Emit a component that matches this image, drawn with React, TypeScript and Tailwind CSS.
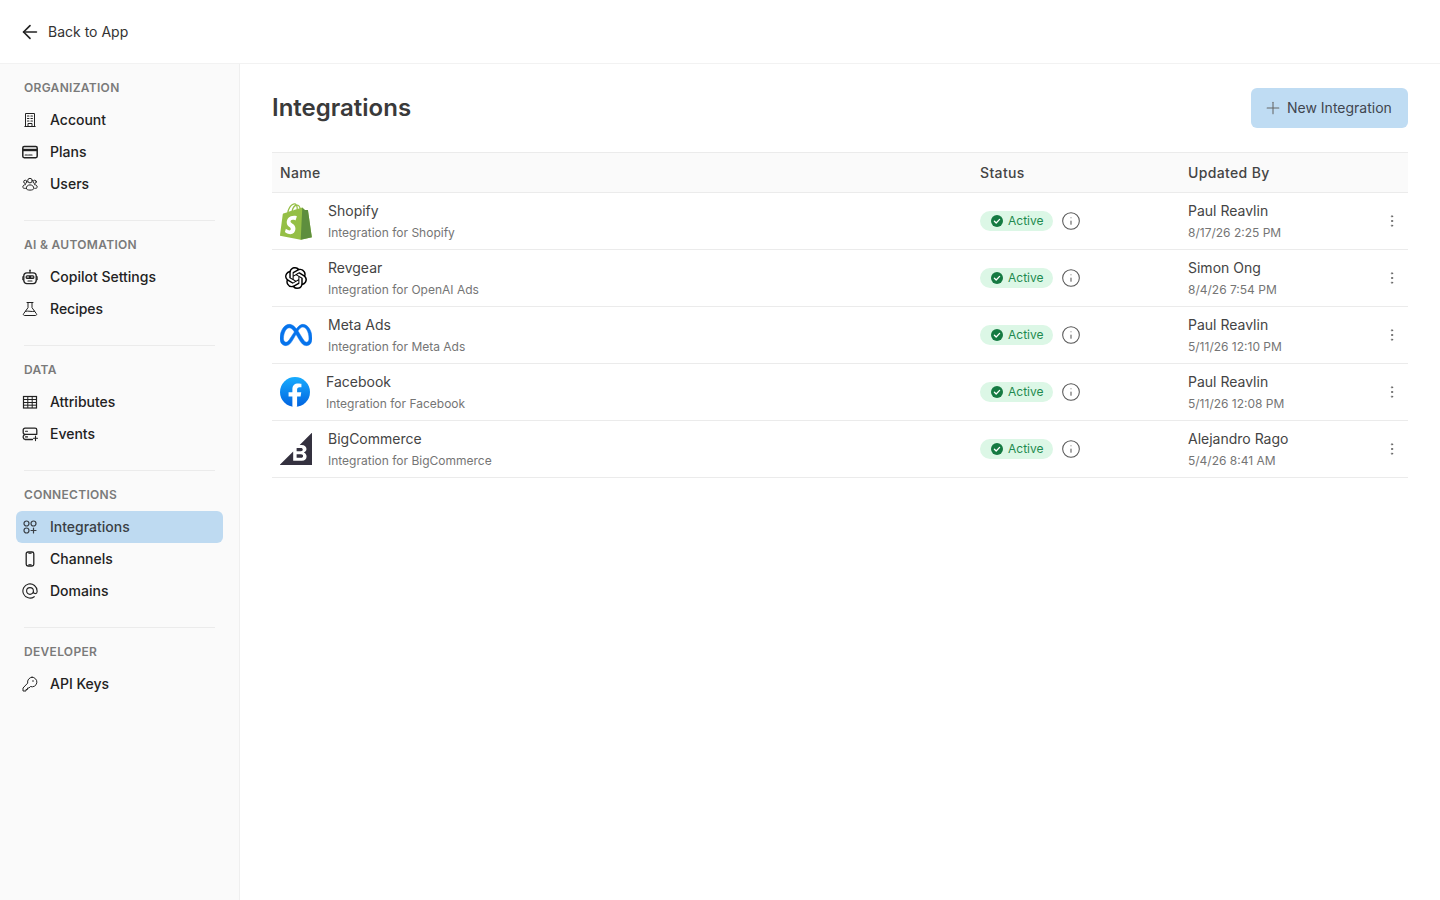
import { ArrowLeft, Plus, Info, EllipsisVertical } from 'lucide-react'
import { SiOpenai, SiMeta, SiBigcommerce } from 'react-icons/si'
import type { ReactNode } from 'react'

const Ico = ({ children }: { children: ReactNode }) => (
    <svg width="16" height="16" viewBox="0 0 16 16" fill="none" stroke="currentColor" strokeWidth="1" strokeLinecap="round" strokeLinejoin="round">
        {children}
    </svg>
)

const BuildingIcon = () => (
    <Ico>
        <path d="M3.500 14.500v-13h9v13M2.800 14.500h10.400" />
        <path d="M5.500 4h1.400M9 4h1.400M5.500 6.500h1.400M9 6.500h1.400M5.500 9h1.400M9 9h1.400" strokeWidth="1.200" />
        <path d="M6 14.500v-3h4v3" />
    </Ico>
)
const CardIcon = () => (
    <Ico>
        <rect x="0.800" y="2.500" width="14.400" height="11.200" rx="1.400" strokeWidth="1.500" />
        <path d="M1 6h14" strokeWidth="2.400" strokeLinecap="butt" />
        <path d="M3.200 11h2.200M6.600 11h3.400" strokeWidth="1.200" />
    </Ico>
)
const UsersIcon = () => (
    <Ico>
        <circle cx="8" cy="4.600" r="2.300" />
        <circle cx="3.300" cy="5.800" r="1.600" />
        <circle cx="12.700" cy="5.800" r="1.600" />
        <path d="M4.200 12.400c0-2.200 1.700-3.500 3.800-3.500s3.800 1.300 3.800 3.500c0 1.100-1.700 1.700-3.800 1.700s-3.800-.6-3.800-1.700z" />
        <path d="M3.500 8.600C2 8.600.8 9.600.8 11.100c0 .8.800 1.300 2.300 1.300M12.500 8.600c1.500 0 2.700 1 2.700 2.500 0 .8-.8 1.300-2.300 1.300" />
    </Ico>
)
const RobotIcon = () => (
    <Ico>
        <path d="M8 1.800v2" strokeWidth="1.200" />
        <circle cx="8" cy="1.400" r="0.800" fill="currentColor" stroke="none" />
        <rect x="1.800" y="3.800" width="12.400" height="10.800" rx="3" strokeWidth="1.300" />
        <path d="M1.500 7.500H.8v3.500h.7M14.500 7.500h.7v3.500h-.7" />
        <rect x="3.600" y="6.200" width="8.800" height="3.800" rx="1.500" fill="currentColor" stroke="none" />
        <path d="M5.200 8h1.400M9.400 8h1.400" stroke="#fafafa" strokeWidth="0.900" />
        <path d="M6 12h4" strokeWidth="1.100" />
    </Ico>
)
const FlaskIcon = () => (
    <Ico>
        <path d="M5 1.500h6M6 1.500v5.200L1.700 12.600a1.100 1.100 0 0 0 .9 1.900h10.800a1.100 1.100 0 0 0 .9-1.900L10 6.700V1.500" />
        <path d="M3.400 10.300c2.800-.9 6.400.9 9.200 0" />
    </Ico>
)
const TableIcon = () => (
    <Ico>
        <rect x="1.500" y="2.500" width="13" height="11.500" strokeWidth="1.200" strokeLinejoin="miter" />
        <path d="M1.500 5.500h13M1.500 8.500h13M1.500 11.200h13M5.800 2.500v11.500M10.200 2.500v11.500" strokeLinecap="butt" />
    </Ico>
)
const ServerIcon = () => (
    <Ico>
        <path d="M4 8.300H3a1.800 1.800 0 0 1-1.800-1.800V4A1.800 1.800 0 0 1 3 2.200h10A1.800 1.800 0 0 1 14.800 4v4.300H4a2.600 2.600 0 0 0-2.800 2.500v.6A2.600 2.600 0 0 0 3 13.500h7.500" strokeWidth="1.300" />
        <path d="M3.500 5.300h2M3.500 10.900h2" strokeWidth="1.100" />
        <path d="M13.500 10v4.600M11.500 12.300h4" strokeWidth="1.100" />
    </Ico>
)
const ShapesIcon = () => (
    <Ico>
        <circle cx="4.500" cy="4.500" r="2.500" strokeWidth="1.200" />
        <circle cx="11.500" cy="4.500" r="2.500" strokeWidth="1.200" />
        <circle cx="4.500" cy="11.500" r="2.500" strokeWidth="1.200" />
        <path d="M11.500 9v5M9 11.500h5" strokeWidth="1.200" />
    </Ico>
)
const PhoneIcon = () => (
    <Ico>
        <rect x="4.200" y="1" width="7.600" height="14" rx="1.800" strokeWidth="1.300" />
        <path d="M6.800 2.300h2.400M6.800 13.700h2.400" />
    </Ico>
)
const AtIcon = () => (
    <Ico>
        <path d="M11.400 8a3.400 3.400 0 1 1-6.800 0 3.400 3.400 0 0 1 6.800 0zM11.400 8v.8c0 2.400 3.700 2.400 3.700 0V8a7.100 7.100 0 1 0-2.900 5.700" strokeWidth="1.100" />
    </Ico>
)
const KeyIcon = () => (
    <Ico>
        <path d="M10 1.200a4.800 4.800 0 1 1-1.600 9.300L7 12H5.500v1.500H4V15H1v-3l4.700-4.900A4.800 4.800 0 0 1 10 1.200z" />
        <circle cx="11" cy="5" r="0.800" fill="currentColor" stroke="none" />
    </Ico>
)

const ShopifyLogo = () => (
    <svg width="32" height="37" viewBox="0 0 256 292">
        <path fill="#95BF46" d="M223.774 57.34c-.201-1.46-1.48-2.268-2.537-2.357-1.055-.088-23.383-1.743-23.383-1.743s-15.507-15.395-17.209-17.099c-1.703-1.703-5.029-1.185-6.32-.805-.19.056-3.388 1.043-8.678 2.68-5.18-14.906-14.322-28.604-30.405-28.604-.444 0-.901.018-1.358.044C129.31 3.407 123.644.779 118.75.779c-37.465 0-55.364 46.835-60.976 70.635-14.558 4.511-24.9 7.718-26.221 8.133-8.126 2.549-8.383 2.805-9.45 10.462C21.3 95.806.038 260.235.038 260.235l165.678 31.042 89.77-19.42S223.973 58.8 223.775 57.34zM156.49 40.848l-14.019 4.339c.005-.988.01-1.96.01-3.023 0-9.264-1.286-16.723-3.349-22.636 8.287 1.04 13.806 10.469 17.358 21.32zm-27.638-19.483c2.304 5.773 3.802 14.058 3.802 25.238 0 .572-.005 1.095-.01 1.624-9.117 2.824-19.024 5.89-28.953 8.966 5.575-21.516 16.025-31.908 25.161-35.828zm-11.131-10.537c1.617 0 3.246.549 4.805 1.622-12.007 5.65-24.877 19.88-30.312 48.297l-22.886 7.088C75.694 46.16 90.81 10.828 117.72 10.828z" />
        <path fill="#5E8E3E" d="M221.237 54.983c-1.055-.088-23.383-1.743-23.383-1.743s-15.507-15.395-17.209-17.099c-.637-.634-1.496-.959-2.394-1.099l-12.527 256.233 89.762-19.418S223.972 58.8 223.774 57.34c-.201-1.46-1.48-2.268-2.537-2.357" />
        <path fill="#FFF" d="M135.242 104.585l-11.069 32.926s-9.698-5.176-21.586-5.176c-17.428 0-18.305 10.937-18.305 13.693 0 15.038 39.2 20.8 39.2 55.97 0 27.67-17.55 45.488-41.21 45.488-28.39 0-42.907-17.669-42.907-17.669l7.602-25.117s14.923 12.812 27.517 12.812c8.228 0 11.575-6.478 11.575-11.211 0-19.586-32.16-20.46-32.16-52.643 0-27.086 19.44-53.298 58.684-53.298 15.122 0 22.59 4.332 22.59 4.332" />
    </svg>
)

const FacebookLogo = () => (
    <svg width="30" height="30" viewBox="2 2 28 28">
        <defs>
            <linearGradient id="fbg" x1="16" y1="2" x2="16" y2="30" gradientUnits="userSpaceOnUse">
                <stop offset="0" stopColor="#18acfe" />
                <stop offset="1" stopColor="#0163e0" />
            </linearGradient>
        </defs>
        <circle cx="16" cy="16" r="14" fill="url(#fbg)" />
        <path fill="#fff" d="M21.2 20.300 21.840 16.330H17.950V13.770C17.950 12.690 18.490 11.630 20.230 11.630H22V8.270S20.400 8 18.860 8C15.660 8 13.560 9.890 13.560 13.320V16.330H10V20.300H13.560V29.830C14.280 29.940 15.010 30 15.750 30 16.500 30 17.230 29.940 17.950 29.830V20.300H21.200Z" />
    </svg>
)

type NavItem = { label: string; icon: ReactNode; active?: boolean }

const sections: { title: string; items: NavItem[] }[] = [
    {
        title: 'ORGANIZATION',
        items: [
            { label: 'Account', icon: <BuildingIcon /> },
            { label: 'Plans', icon: <CardIcon /> },
            { label: 'Users', icon: <UsersIcon /> },
        ],
    },
    {
        title: 'AI & AUTOMATION',
        items: [
            { label: 'Copilot Settings', icon: <RobotIcon /> },
            { label: 'Recipes', icon: <FlaskIcon /> },
        ],
    },
    {
        title: 'DATA',
        items: [
            { label: 'Attributes', icon: <TableIcon /> },
            { label: 'Events', icon: <ServerIcon /> },
        ],
    },
    {
        title: 'CONNECTIONS',
        items: [
            { label: 'Integrations', icon: <ShapesIcon />, active: true },
            { label: 'Channels', icon: <PhoneIcon /> },
            { label: 'Domains', icon: <AtIcon /> },
        ],
    },
    {
        title: 'DEVELOPER',
        items: [{ label: 'API Keys', icon: <KeyIcon /> }],
    },
]

const rows = [
    { name: 'Shopify', desc: 'Integration for Shopify', by: 'Paul Reavlin', date: '8/17/26 2:25 PM', logo: <ShopifyLogo />, w: 'w-8' },
    { name: 'Revgear', desc: 'Integration for OpenAI Ads', by: 'Simon Ong', date: '8/4/26 7:54 PM', logo: <SiOpenai size={22} className="text-black" />, w: 'w-8' },
    { name: 'Meta Ads', desc: 'Integration for Meta Ads', by: 'Paul Reavlin', date: '5/11/26 12:10 PM', logo: <SiMeta size={32} stroke="currentColor" strokeWidth={0.35} className="text-[#0673ec]" />, w: 'w-8' },
    { name: 'Facebook', desc: 'Integration for Facebook', by: 'Paul Reavlin', date: '5/11/26 12:08 PM', logo: <FacebookLogo />, w: 'w-[30px]' },
    { name: 'BigCommerce', desc: 'Integration for BigCommerce', by: 'Alejandro Rago', date: '5/4/26 8:41 AM', logo: <SiBigcommerce size={32} className="text-[#34313f]" />, w: 'w-8' },
]

export default function App() {
    return (
        <div className="min-h-screen h-[900px] flex flex-col bg-white text-[#333] font-['Inter',sans-serif] overflow-hidden">
            <header className="h-16 shrink-0 flex items-center pl-[19px] gap-[7px] border-b border-[#f2f2f2]">
                <ArrowLeft size={22} strokeWidth={1.8} className="text-[#222]" />
                <span className="text-sm text-[#333]">Back to App</span>
            </header>

            <div className="flex flex-1 min-h-0">
                <aside className="w-60 shrink-0 bg-[#fafafa] border-r border-[#efefef] px-4">
                    {sections.map((s, i) => (
                        <div key={s.title} className={i > 0 ? 'border-t border-[#ebebeb] mx-2' : 'mx-2'}>
                            <div className="h-6 mt-3 mb-1 flex items-center text-xs font-semibold tracking-[0.025em] text-[#7a7a7a]">{s.title}</div>
                            <div className={i === sections.length - 1 ? '' : 'mb-5'}>
                                {s.items.map(item => (
                                    <div
                                        key={item.label}
                                        className={`-ml-2 w-[207px] h-8 flex items-center gap-3 pl-[6px] rounded-md text-sm font-medium ${item.active ? 'bg-[#bedaf1] text-[#3a3f45]' : 'text-[#222]'}`}
                                    >
                                        <span className="w-4 flex justify-center">{item.icon}</span>
                                        <span>{item.label}</span>
                                    </div>
                                ))}
                            </div>
                        </div>
                    ))}
                </aside>

                <main className="flex-1 px-8 pt-6">
                    <div className="h-10 flex items-center justify-between mb-6">
                        <h1 className="text-2xl font-semibold text-[#3a3a3a]">Integrations</h1>
                        <button className="h-10 w-[157px] flex items-center gap-1 pl-3 rounded-md bg-[#bfdcf3] text-sm text-[#3f4650]">
                            <Plus size={20} strokeWidth={1.25} className="text-[#666]" />
                            New Integration
                        </button>
                    </div>

                    <div className="border-t border-[#ebebeb]">
                        <div className="h-10 grid grid-cols-[708px_208px_1fr] items-center bg-[#fafafa] border-b border-[#ebebeb] text-sm font-medium tracking-[0.025em] text-[#444]">
                            <div className="pl-2">Name</div>
                            <div>Status</div>
                            <div>Updated By</div>
                        </div>
                        {rows.map(r => (
                            <div key={r.name} className="h-[57px] grid grid-cols-[708px_208px_1fr] items-center border-b border-[#ebebeb]">
                                <div className="pl-2 flex items-center gap-4">
                                    <span className={`${r.w} flex justify-center`}>{r.logo}</span>
                                    <div className="pt-[2px]">
                                        <div className="text-sm leading-[22px] text-[#444]">{r.name}</div>
                                        <div className="text-xs leading-[22px] text-[#757575]">{r.desc}</div>
                                    </div>
                                </div>
                                <div className="flex items-center gap-2">
                                    <span className="h-5 w-[73px] flex items-center gap-[5px] pl-[11px] rounded-full bg-[#dcf7e6] text-xs text-[#1e8a4f]">
                                        <svg width="12" height="12" viewBox="0 0 12 12">
                                            <circle cx="6" cy="6" r="6" fill="#157a42" />
                                            <path d="M3.400 6.200 5.200 8 8.600 4.400" fill="none" stroke="#fff" strokeWidth="1.300" strokeLinecap="round" strokeLinejoin="round" />
                                        </svg>
                                        Active
                                    </span>
                                    <Info size={20} strokeWidth={1.25} className="text-[#555]" />
                                </div>
                                <div className="flex items-center justify-between pr-2">
                                    <div className="pt-[2px]">
                                        <div className="text-sm leading-[22px] text-[#444]">{r.by}</div>
                                        <div className="text-xs leading-[22px] text-[#757575]">{r.date}</div>
                                    </div>
                                    <EllipsisVertical size={16} strokeWidth={1.5} className="text-[#666]" />
                                </div>
                            </div>
                        ))}
                    </div>
                </main>
            </div>
        </div>
    )
}
